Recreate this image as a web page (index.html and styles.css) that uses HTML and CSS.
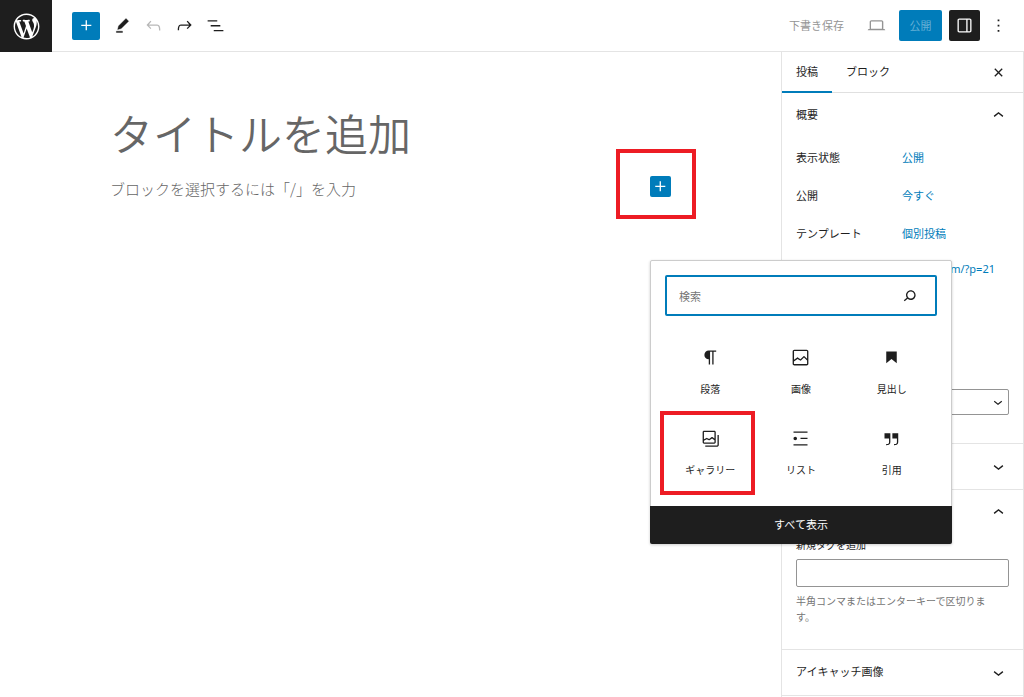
FILE: index.html
```html
<!DOCTYPE html>
<html lang="ja">
<head>
<meta charset="utf-8">
<meta name="viewport" content="width=device-width, initial-scale=1">
<title>投稿の編集</title>
<link rel="stylesheet" href="styles.css">
</head>
<body>
<div class="app">
  <header class="topbar">
    <a class="home" href="#" aria-label="WordPress">
      <svg viewBox="-2 -2 24 24"><path d="M20 10c0-5.51-4.49-10-10-10C4.48 0 0 4.49 0 10c0 5.52 4.48 10 10 10 5.51 0 10-4.48 10-10zM7.78 15.37L4.37 6.22c.55-.02 1.17-.08 1.17-.08.5-.06.44-1.13-.06-1.11 0 0-1.45.11-2.37.11-.18 0-.37 0-.58-.01C4.12 2.69 6.87 1.11 10 1.11c2.33 0 4.45.87 6.05 2.34-.68-.11-1.65.39-1.65 1.58 0 .74.45 1.36.9 2.1.35.61.55 1.36.55 2.46 0 1.49-1.4 5-1.4 5l-3.03-8.37c.54-.02.82-.17.82-.17.5-.05.44-1.25-.06-1.22 0 0-1.44.12-2.38.12-.87 0-2.33-.12-2.33-.12-.5-.03-.56 1.2-.06 1.22l.92.08 1.26 3.41zM17.41 10c.24-.64.74-1.87.43-4.25.7 1.29 1.05 2.71 1.05 4.25 0 3.29-1.73 6.24-4.4 7.78.97-2.59 1.94-5.2 2.92-7.78zM6.1 18.09C3.12 16.65 1.11 13.53 1.11 10c0-1.3.23-2.48.72-3.59C3.25 10.3 4.67 14.2 6.1 18.09zm4.03-6.63l2.58 6.98c-.86.29-1.76.45-2.71.45-.79 0-1.57-.11-2.29-.33.81-2.38 1.62-4.74 2.42-7.1z"/></svg>
    </a>
    <div class="tools">
      <button class="tool tool-add" aria-label="ブロック挿入"><svg viewBox="0 0 24 24"><path d="M11 12.5V17.5H12.5V12.5H17.5V11H12.5V6H11V11H6V12.5H11Z"/></svg></button>
      <button class="tool" aria-label="ツール"><svg viewBox="0 0 24 24"><path d="m19 7-3-3-8.500 8.500-1 4 4-1L19 7Zm-7 11.500H5V20h7v-1.500Z" stroke="currentColor" stroke-width=".4"/></svg></button>
      <button class="tool tool-off" aria-label="元に戻す" disabled><svg viewBox="0 0 24 24"><path d="M18.3 11.7c-.6-.6-1.400-.9-2.300-.9H6.700l2.900-3.300-1.100-1-4.500 5L8.500 16l1-1-2.700-2.700H16c.5 0 .9.2 1.300.5 1 1 1 3.400 1 4.500v.3h1.500v-.2c0-1.500 0-4.300-1.500-5.700z"/></svg></button>
      <button class="tool" aria-label="やり直す"><svg viewBox="0 0 24 24"><path d="M15.600 6.500l-1.100 1 2.900 3.300H8c-.9 0-1.700.3-2.300.9-1.400 1.500-1.400 4.200-1.400 5.600v.2h1.500v-.3c0-1.100 0-3.500 1-4.500.3-.3.7-.5 1.300-.5h9.200L14.500 15l1.100 1.100 4.600-4.600-4.600-5z"/></svg></button>
      <button class="tool" aria-label="リスト表示"><svg viewBox="0 0 24 24"><path d="M3 6h11v1.500H3V6Zm3.500 5.500h11V13h-11v-1.500ZM21 17H10v1.500h11V17Z"/></svg></button>
    </div>
    <div class="actions">
      <button class="save" disabled>下書き保存</button>
      <button class="action action-preview" aria-label="プレビュー" disabled><svg viewBox="0 0 24 24"><path d="M20.500 16h-.7V8c0-1.100-.9-2-2-2H6.200c-1.100 0-2 .9-2 2v8h-.7c-.8 0-1.500.7-1.500 1.500h20c0-.8-.7-1.500-1.500-1.500zM5.700 8c0-.3.2-.5.5-.5h11.500c.3 0 .5.2.5.5v7.600H5.700V8z"/></svg></button>
      <button class="publish" disabled>公開</button>
      <button class="action action-sidebar" aria-label="設定"><svg viewBox="0 0 24 24"><path d="M18 4H6c-1.100 0-2 .9-2 2v12c0 1.100.9 2 2 2h12c1.100 0 2-.9 2-2V6c0-1.100-.9-2-2-2zm-4 14.500H6c-.3 0-.5-.2-.5-.5V6c0-.3.2-.5.5-.5h8v13zm4.500-.5c0 .3-.2.5-.5.5h-2.500v-13H18c.3 0 .5.2.5.5v12z"/></svg></button>
      <button class="action action-more" aria-label="オプション"><svg viewBox="0 0 24 24"><path d="M13 19h-2v-2h2v2zm0-6h-2v-2h2v2zm0-6h-2V5h2v2z"/></svg></button>
    </div>
  </header>

  <div class="workspace">
    <main class="canvas">
      <div class="post">
        <h1 class="post-title">タイトルを追加</h1>
        <div class="post-row">
          <p class="post-prompt">ブロックを選択するには「/」を入力</p>
          <div class="inserter">
            <button class="inserter-button" aria-label="ブロックを追加"><svg viewBox="0 0 24 24"><path d="M11 12.500V17.500H12.500V12.500H17.500V11H12.500V6H11V11H6V12.500H11Z"/></svg></button>
            <span class="mark mark-inserter"></span>
            <div class="popover">
              <div class="search">
                <input class="search-input" type="text" placeholder="検索" aria-label="検索">
                <svg viewBox="0 0 24 24"><path d="M13.500 6C10.500 6 8 8.500 8 11.500c0 1.100.3 2.100.9 3l-3.400 3 1 1.100 3.400-2.900c1 .9 2.200 1.400 3.600 1.400 3 0 5.500-2.500 5.500-5.500C19 8.500 16.500 6 13.500 6zm0 9.500c-2.200 0-4-1.800-4-4s1.800-4 4-4 4 1.800 4 4-1.800 4-4 4z"/></svg>
              </div>
              <div class="blocks">
                <button class="block"><svg viewBox="0 0 24 24"><path d="m9.996 14v-.225l.004 0v6.225h1.500v-14.500h2.500v14.500h1.500v-14.500h3v-1.500h-8.504c-2.761 0-5 2.239-5 5 0 2.761 2.239 5 5 5z"/></svg>段落</button>
                <button class="block"><svg viewBox="0 0 24 24"><path d="M19 3H5c-1.100 0-2 .9-2 2v14c0 1.100.9 2 2 2h14c1.100 0 2-.9 2-2V5c0-1.100-.9-2-2-2zM5 4.500h14c.3 0 .5.2.5.5v8.400l-3-2.900c-.3-.3-.8-.3-1 0L11.900 14 9 12c-.3-.2-.6-.2-.8 0l-3.600 2.600V5c-.1-.3.1-.5.4-.5zm14 15H5c-.3 0-.5-.2-.5-.5v-2.400l4.100-3 3 1.900c.3.2.7.2.9-.1L16 12l3.500 3.400V19c0 .3-.2.5-.5.5z"/></svg>画像</button>
                <button class="block"><svg viewBox="0 0 24 24"><path d="M6 5V18.591L12 13.847L18 18.591V5H6Z"/></svg>見出し</button>
                <button class="block"><svg viewBox="0 0 24 24"><path fill-rule="evenodd" d="M16.375 4.500H4.625a.125.125 0 0 0-.125.125v8.254l2.859-1.540a.75.75 0 0 1 .68-.016l2.384 1.142 2.890-2.074a.75.75 0 0 1 .874 0l2.313 1.660V4.625a.125.125 0 0 0-.125-.125Zm.125 9.398-2.750-1.975-2.813 2.020a.75.75 0 0 1-.76.067l-2.444-1.170L4.500 14.583v1.792c0 .069.056.125.125.125h11.750a.125.125 0 0 0 .125-.125v-2.477ZM4.625 3C3.728 3 3 3.728 3 4.625v11.750C3 17.273 3.728 18 4.625 18h11.750c.898 0 1.625-.727 1.625-1.625V4.625C18 3.728 17.273 3 16.375 3H4.625ZM20 8v11c0 .69-.31 1-.999 1H6v1.500h13.001c1.520 0 2.499-.982 2.499-2.500V8H20Z"/></svg>ギャラリー<span class="mark mark-gallery"></span></button>
                <button class="block"><svg viewBox="0 0 24 24"><path d="M4 4v1.500h16V4H4zm8 8.500h8V11h-8v1.500zM4 20h16v-1.500H4V20zm4-8c0-1.100-.9-2-2-2s-2 .9-2 2 .9 2 2 2 2-.9 2-2z"/></svg>リスト</button>
                <button class="block"><svg viewBox="0 0 24 24"><path d="M13 6v6h5.200v4c0 .8-.2 1.400-.5 1.700-.6.6-1.600.6-2.500.5h-.3v1.500h.5c1 0 2.300-.1 3.300-1 .6-.6 1-1.600 1-2.800V6H13zm-9 6h5.200v4c0 .8-.2 1.400-.5 1.700-.6.6-1.600.6-2.500.5h-.3v1.500h.5c1 0 2.300-.1 3.300-1 .6-.6 1-1.600 1-2.800V6H4v6z"/></svg>引用</button>
              </div>
              <button class="show-all">すべて表示</button>
            </div>
          </div>
        </div>
      </div>
    </main>

    <aside class="sidebar">
      <div class="tabs">
        <button class="tab tab-active">投稿</button>
        <button class="tab">ブロック</button>
        <button class="close" aria-label="設定を閉じる"><svg viewBox="0 0 24 24"><path d="M12 13.060l3.712 3.713 1.061-1.060L13.061 12l3.712-3.712-1.060-1.060L12 10.938 8.288 7.227l-1.061 1.060L10.939 12l-3.712 3.712 1.060 1.061L12 13.061z"/></svg></button>
      </div>
      <section class="panel">
        <button class="panel-head"><span class="panel-name">概要</span><svg viewBox="0 0 24 24"><path d="M6.500 12.400L12 8l5.500 4.400-.9 1.200L12 10l-4.500 3.600-1-1.200z"/></svg></button>
        <dl class="facts">
          <dt>表示状態</dt><dd><a href="#">公開</a></dd>
          <dt>公開</dt><dd><a href="#">今すぐ</a></dd>
          <dt>テンプレート</dt><dd><a href="#">個別投稿</a></dd>
        </dl>
        <a class="permalink" href="#">m/?p=21</a>
        <div class="author">
          <select class="author-select" aria-label="投稿者"><option></option></select>
          <svg viewBox="0 0 24 24"><path d="M17.500 11.600L12 16l-5.500-4.400.9-1.200L12 14l4.500-3.600 1 1.200z"/></svg>
        </div>
      </section>
      <section class="panel">
        <button class="panel-head" aria-label="カテゴリー"><svg viewBox="0 0 24 24"><path d="M17.500 11.600L12 16l-5.500-4.400.9-1.200L12 14l4.500-3.600 1 1.200z"/></svg></button>
      </section>
      <section class="panel">
        <button class="panel-head" aria-label="タグ"><svg viewBox="0 0 24 24"><path d="M6.500 12.400L12 8l5.500 4.400-.9 1.200L12 10l-4.500 3.600-1-1.200z"/></svg></button>
        <label class="tag-label" for="tag">新規タグを追加</label>
        <input class="tag-input" id="tag" type="text">
        <p class="tag-help">半角コンマまたはエンターキーで区切ります。</p>
      </section>
      <section class="panel">
        <button class="panel-head"><span class="panel-name">アイキャッチ画像</span><svg viewBox="0 0 24 24"><path d="M17.500 11.600L12 16l-5.500-4.400.9-1.200L12 14l4.500-3.600 1 1.200z"/></svg></button>
      </section>
    </aside>
  </div>
</div>
</body>
</html>
```

FILE: styles.css
```css
* { box-sizing: border-box; }

body {
  margin: 0;
  background: #fff;
  color: #1e1e1e;
  font: 11px/16px "Noto Sans CJK JP", "Noto Sans", sans-serif;
}

button, input, select { font: inherit; color: inherit; }
button { margin: 0; padding: 0; border: 0; background: none; }
a { color: #007cba; text-decoration: none; }
h1, p, dl, dd { margin: 0; }
svg { display: block; width: 21px; height: 21px; flex: none; fill: currentColor; }

.app { display: flex; flex-direction: column; min-height: 100vh; }

.topbar {
  display: flex;
  align-items: center;
  height: 52px;
  border-bottom: 1px solid #e4e4e4;
}
.home {
  display: grid;
  place-items: center;
  width: 52px;
  height: 52px;
  margin-bottom: -1px;
  background: #1e1e1e;
  color: #fff;
}
.home svg { width: 31px; height: 31px; }
.tools { display: flex; align-items: center; gap: 10px; margin-left: 20px; }
.tool { display: grid; place-items: center; width: 21px; height: 28px; }
.tool-add { width: 28px; margin-right: 2px; border-radius: 2px; background: #007cba; color: #fff; }
.tool-off { color: #b8b8b8; }
.actions { display: flex; align-items: center; gap: 7px; margin-left: auto; padding-right: 14px; }
.save { margin-right: 10px; padding-bottom: 2px; color: #949494; }
.action { display: grid; place-items: center; width: 31px; height: 31px; border-radius: 2px; }
.action-preview { color: #949494; }
.action-sidebar { background: #1e1e1e; color: #fff; }
.action-more { width: 23px; }
.publish {
  width: 43px;
  height: 31px;
  padding-bottom: 2px;
  border-radius: 2px;
  background: #007cba;
  color: #66b0d6;
}

.workspace { display: flex; flex: 1; }
.canvas { flex: 1; padding-top: 48px; }
.post { max-width: 561px; margin: 0 auto; }
.post-title { color: #666; font-size: 43px; font-weight: 350; line-height: 64px; }
.post-row { display: flex; align-items: center; justify-content: space-between; margin-top: 12px; }
.post-prompt { color: #666; font-size: 15px; font-weight: 300; line-height: 24px; }

.inserter { position: relative; margin-bottom: 4px; }
.inserter-button { display: block; border-radius: 2px; background: #007cba; color: #fff; }
.mark { position: absolute; border: 4px solid #ed1c24; pointer-events: none; }
.mark-inserter { top: -27px; left: -34px; width: 80px; height: 70px; }
.mark-gallery { top: -1px; left: -5px; width: 95px; height: 84px; }

.popover {
  position: absolute;
  z-index: 2;
  top: 84px;
  left: 0;
  width: 302px;
  border: 1px solid #ccc;
  border-radius: 2px;
  background: #fff;
  box-shadow: 0 1px 3px rgba(0, 0, 0, .2);
}
.search {
  display: flex;
  align-items: center;
  height: 41px;
  margin: 14px 14px 0;
  padding: 0 15px 0 12px;
  border: 2px solid #007cba;
  border-radius: 2px;
}
.search-input { flex: 1; min-width: 0; padding: 0; border: 0; outline: 0; background: none; }
.search-input::placeholder { color: #757575; opacity: 1; }
.blocks { display: grid; grid-template-columns: repeat(3, 1fr); margin: 15px 14px 13px; }
.block {
  position: relative;
  display: flex;
  flex-direction: column;
  align-items: center;
  gap: 13px;
  padding: 16px 0 15px;
  font-size: 10px;
}
.show-all {
  display: block;
  width: calc(100% + 2px);
  height: 38px;
  margin: 0 -1px -1px;
  padding-bottom: 2px;
  border-radius: 0 0 2px 2px;
  background: #1e1e1e;
  color: #fff;
}

.sidebar { width: 243px; border: solid #e4e4e4; border-width: 0 1px; }
.tabs { display: flex; height: 41px; border-bottom: 1px solid #e0e0e0; }
.tab { height: 41px; padding: 0 14px 4px; }
.tab-active { border-bottom: 2px solid #007cba; padding-bottom: 2px; }
.close { margin-left: auto; padding-right: 14px; }

.panel { padding: 0 14px; border-bottom: 1px solid #e4e4e4; }
.panel-head { display: flex; align-items: center; width: 100%; height: 45px; text-align: left; }
.panel-head svg { margin-left: auto; }
.panel-name { padding-bottom: 3px; }
.facts {
  display: grid;
  grid-template-columns: 106px 1fr;
  row-gap: 22px;
  margin-top: 11px;
}
.permalink { display: block; margin: 20px 14px 0; text-align: right; font-family: "Noto Sans", sans-serif; }
.author { display: flex; align-items: center; margin: 112px 0 28px; }
.author-select {
  appearance: none;
  width: 100%;
  height: 26px;
  padding: 0 28px 0 8px;
  border: 1px solid #949494;
  border-radius: 2px;
  background: #fff;
}
.author svg { width: 18px; height: 18px; margin-left: -20px; margin-right: 2px; pointer-events: none; }
.tag-label { display: block; margin-top: 2px; font-size: 10px; }
.tag-input { display: block; width: 100%; height: 28px; margin-top: 6px; border: 1px solid #949494; border-radius: 2px; }
.tag-help { margin: 6px 0 24px; padding-right: 16px; color: #757575; font-size: 10px; }
```
